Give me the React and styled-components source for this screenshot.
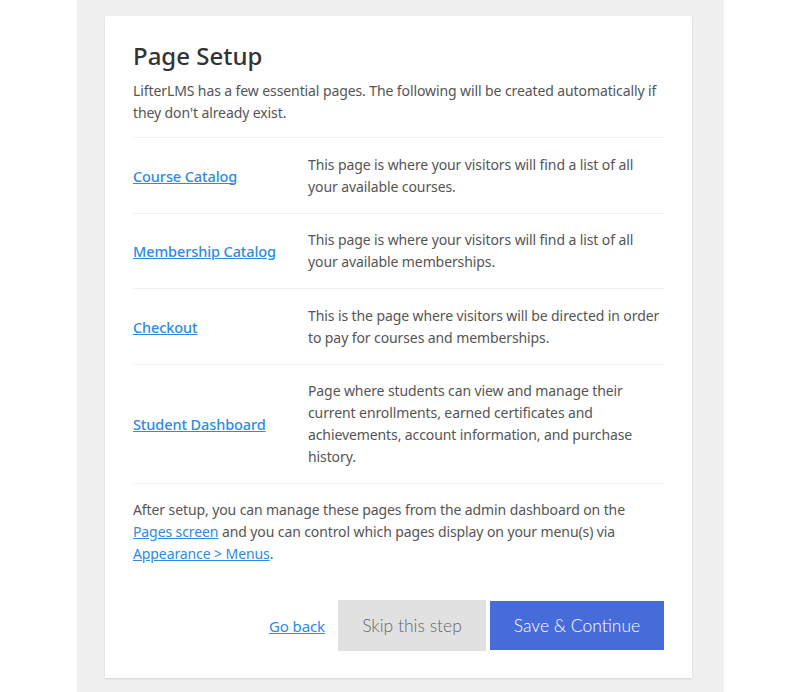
import React from "react";
import styled, { createGlobalStyle } from "styled-components";

const GlobalStyle = createGlobalStyle`
  html, body {
    margin: 0;
    padding: 0;
    background: #fff;
  }
  body {
    font-family: "Noto Sans", "Open Sans", sans-serif;
    -webkit-font-smoothing: antialiased;
  }
`;

const pages = [
  {
    title: "Course Catalog",
    desc: "This page is where your visitors will find a list of all your available courses."
  },
  {
    title: "Membership Catalog",
    desc: "This page is where your visitors will find a list of all your available memberships."
  },
  {
    title: "Checkout",
    desc: "This is the page where visitors will be directed in order to pay for courses and memberships."
  },
  {
    title: "Student Dashboard",
    desc: "Page where students can view and manage their current enrollments, earned certificates and achievements, account information, and purchase history."
  }
];

const App = () => (
  <>
    <GlobalStyle />
    <Page>
      <Column>
        <Card>
          <Title>Page Setup</Title>
          <Intro>
            LifterLMS has a few essential pages. The following will be created
            automatically if they don't already exist.
          </Intro>
          <PageTable>
            {pages.map(p => (
              <Row key={p.title}>
                <NameCell>
                  <a href="#">{p.title}</a>
                </NameCell>
                <DescCell>{p.desc}</DescCell>
              </Row>
            ))}
          </PageTable>
          <Note>
            After setup, you can manage these pages from the admin dashboard on
            the <a href="#">Pages screen</a> and you can control which pages
            display on your menu(s) via <a href="#">Appearance &gt; Menus</a>.
          </Note>
          <Actions>
            <BackLink href="#">Go back</BackLink>
            <Button>Skip this step</Button>
            <Button primary>Save &amp; Continue</Button>
          </Actions>
        </Card>
      </Column>
    </Page>
  </>
);

const Page = styled.div`
  display: flex;
  justify-content: center;
  min-height: 692px;
  padding-left: 1px;
`;

const Column = styled.div`
  width: 647px;
  background: #f0f0f0;
  padding: 16px 32px 15px 28px;
  box-sizing: border-box;
`;

const Card = styled.div`
  background: #fff;
  padding: 24px 28px 27px;
  box-shadow: 0 1px 2px rgba(0, 0, 0, 0.12);
  color: #555;
  font-size: 14px;
  line-height: 22px;
  letter-spacing: -0.1px;
`;

const Title = styled.h1`
  margin: 0 0 8px;
  font-size: 24px;
  font-weight: 500;
  color: #333;
  line-height: 32px;
  letter-spacing: 0;
`;

const Intro = styled.p`
  margin: 0 0 13px;
`;

const PageTable = styled.div`
  border-top: 1px solid #f0f0f0;
`;

const Row = styled.div`
  display: grid;
  grid-template-columns: 175px 1fr;
  align-items: center;
  padding: 15.5px 0 15px;
  border-bottom: 1px solid #f0f0f0;
`;

const NameCell = styled.div`
  font-size: 14.5px;

  a {
    color: #2e8ae4;
    font-weight: 500;
    text-decoration: underline;
  }
`;

const DescCell = styled.div`
  color: #555;
`;

const Note = styled.p`
  margin: 15px 0 0;

  a {
    color: #2e8ae4;
    text-decoration: underline;
  }
`;

const Actions = styled.div`
  display: flex;
  justify-content: flex-end;
  align-items: center;
  gap: 4px;
  margin-top: 35px;
`;

const BackLink = styled.a`
  color: #2e8ae4;
  font-size: 15px;
  text-decoration: underline;
  margin-right: 9px;
`;

const Button = styled.button`
  border: none;
  font-family: "Lato", "Noto Sans", sans-serif;
  font-size: 17.5px;
  font-weight: 300;
  width: ${({ primary }) => (primary ? "174px" : "148px")};
  height: ${({ primary }) => (primary ? "49px" : "51px")};
  padding: 0;
  background: ${({ primary }) => (primary ? "#466cd9" : "#e1e1e1")};
  color: ${({ primary }) => (primary ? "#fff" : "#666")};
  cursor: pointer;
`;

export default App;
